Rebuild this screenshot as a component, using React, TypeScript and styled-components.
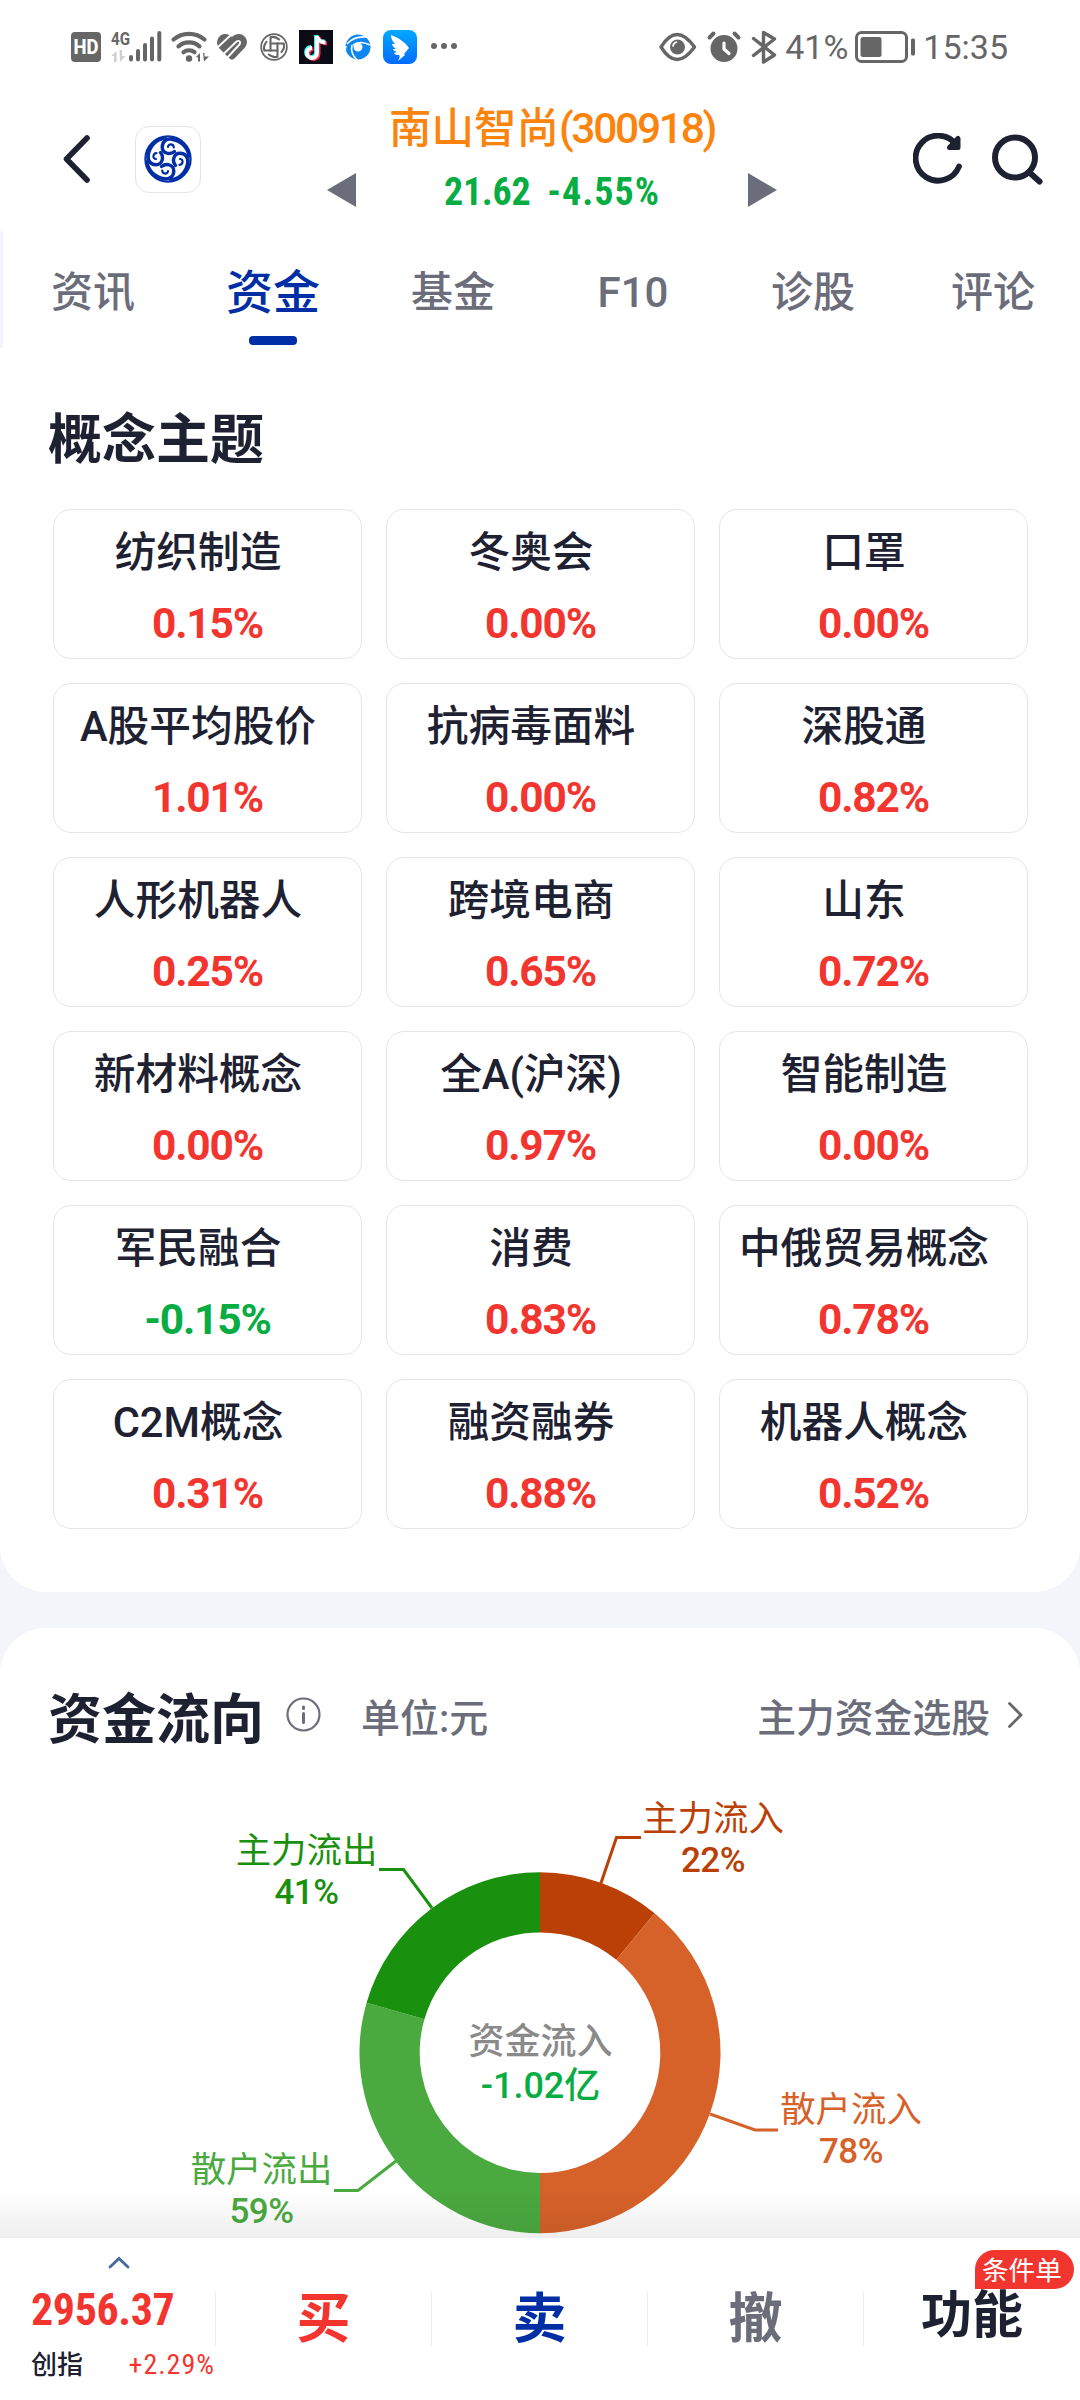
import React from 'react';
import styled, { createGlobalStyle } from 'styled-components';

const Colors = {
  ink: '#1e2131',
  gray: '#6c6d7a',
  status: '#666666',
  red: '#f3352f',
  green: '#07ad43',
  blue: '#002fa5',
  orange: '#fb840f',
  line: '#e5e5e6',
  bg: '#f4f5fa',
};

const tabs = ['资讯', '资金', '基金', 'F10', '诊股', '评论'];

const themes = [
  { name: '纺织制造', rate: '0.15%' },
  { name: '冬奥会', rate: '0.00%' },
  { name: '口罩', rate: '0.00%' },
  { name: 'A股平均股价', rate: '1.01%' },
  { name: '抗病毒面料', rate: '0.00%' },
  { name: '深股通', rate: '0.82%' },
  { name: '人形机器人', rate: '0.25%' },
  { name: '跨境电商', rate: '0.65%' },
  { name: '山东', rate: '0.72%' },
  { name: '新材料概念', rate: '0.00%' },
  { name: '全A(沪深)', rate: '0.97%' },
  { name: '智能制造', rate: '0.00%' },
  { name: '军民融合', rate: '-0.15%' },
  { name: '消费', rate: '0.83%' },
  { name: '中俄贸易概念', rate: '0.78%' },
  { name: 'C2M概念', rate: '0.31%' },
  { name: '融资融券', rate: '0.88%' },
  { name: '机器人概念', rate: '0.52%' },
];

// 环形图的四个扇区，角度从正上方顺时针计算
const slices = [
  { name: '主力流入', rate: '22%', color: '#ba4005', from: 0, to: 39.4, x: 713, y: 50, line: '601,104 616.5,58.5 641,58.5' },
  { name: '散户流入', rate: '78%', color: '#d66129', from: 39.4, to: 180, x: 851, y: 341, line: '710,335 755,351 778,351' },
  { name: '散户流出', rate: '59%', color: '#4aa93f', from: 180, to: 286.1, x: 261.5, y: 401, line: '396,382 358,411.5 334,411.5' },
  { name: '主力流出', rate: '41%', color: '#1a900f', from: 286.1, to: 360, x: 306.5, y: 82, line: '432,129 403.5,90.5 379,90.5' },
];

const CX = 540;
const CY = 273.7;

const point = (r: number, deg: number) => {
  const a = (deg * Math.PI) / 180;
  return `${CX + r * Math.sin(a)} ${CY - r * Math.cos(a)}`;
};

const slicePath = (from: number, to: number) =>
  `M${point(180.5, from)}A180.5 180.5 0 0 1 ${point(180.5, to)}L${point(120.3, to)}A120.3 120.3 0 0 0 ${point(120.3, from)}Z`;

const SwirlLogo = ({ size, color }: { size: number; color: string }) => (
  <svg width={size} height={size} viewBox='-24 -24 48 48' fill='none' stroke={color} strokeLinecap='round'>
    <circle r='22.6' strokeWidth='2.2' />
    {[0, 90, 180, 270].map((deg) => (
      <g key={deg} transform={`rotate(${deg})`}>
        <path d='M5.8 -11.5C5.5 -15.5 0 -15.5 0 -12' strokeWidth='2.2' />
        <path d='M6.5 -7.5C1.5 -3.5 -5.8 -6 -5.8 -12C-5.8 -17 -2 -20.5 3.5 -19.8C13 -18.5 19.5 -12 21 -3' strokeWidth='3.4' />
      </g>
    ))}
  </svg>
);

const StatusIcons = () => (
  <svg width='390' height='40' viewBox='70 27 390 40' fill={Colors.status}>
    <rect x='71' y='32' width='30' height='30' rx='4' />
    <text x='86' y='54' textAnchor='middle' fill='#fff' fontFamily='Roboto' fontWeight='800' fontSize='20' textLength='25' lengthAdjust='spacingAndGlyphs'>HD</text>
    <text x='111' y='44.5' fontFamily='Roboto' fontWeight='700' fontSize='19' textLength='19' lengthAdjust='spacingAndGlyphs'>4G</text>
    <path d='M111.500 56l5-5v11h-2.500v-6zM119.500 50h2.500v6h3.500l-5.500 6z' fill='#cfcfcf' />
    <g stroke={Colors.status} strokeWidth='4' strokeLinecap='round'>
      <path d='M131 57v2.500M138 51v8.500M145 45v14.500M152 38.500v21M159.300 33v26.500' />
    </g>
    <g fill='none' stroke={Colors.status} strokeWidth='4.2' strokeLinecap='round'>
      <path d='M173.500 39.500a24 24 0 0 1 31 0M178.500 46.300a16 16 0 0 1 21 0M183.500 52.200a9 9 0 0 1 11 0' />
    </g>
    <circle cx='189' cy='58.5' r='3.2' />
    <path d='M196 57l4-4v8.500h-2v-4zM203 53h1.500v3.500h4.500l-5 5z' />
    <path d='M229.500 58.500L219.500 48.500C216 44.500 216.500 39 220 36C223.500 33 228.500 33.500 232 37C235.500 33.500 241 33 244.500 36.500C248 40 247.500 44.500 244.500 48L234.500 58.500C233 60 231 60 229.500 58.500Z' />
    <g fill='none' stroke='#fff' strokeWidth='1.9'>
      <path d='M217.500 47.500L232 34' />
      <path d='M223.500 54L236.500 41.500Q239 40 240 42Q240.500 43.500 239 45L227 58' />
    </g>
    <svg x='260' y='33' width='28' height='28' viewBox='-24 -24 48 48' fill='none' stroke={Colors.status}>
      <circle r='22' strokeWidth='3' />
      <path d='M-6 -18V8M6 -8V18M-18 6H8M-8 -6H18' strokeWidth='3.5' />
      <path d='M-6 -16Q0 -20 10 -12M16 -6Q20 0 12 10M6 16Q0 20 -10 12M-16 6Q-20 0 -12 -10' strokeWidth='3.5' />
    </svg>
    <rect x='299' y='30' width='34' height='34' fill='#0b0b16' />
    <g fill='none' strokeWidth='4'>
      <path d='M317 36v17a5 5 0 1 1-5-5M317 36q1 6 8.500 6.500' stroke='#25f4ee' transform='translate(-1 -1)' />
      <path d='M317 36v17a5 5 0 1 1-5-5M317 36q1 6 8.500 6.500' stroke='#fe2c55' transform='translate(1.5 1)' />
      <path d='M317 36v17a5 5 0 1 1-5-5M317 36q1 6 8.500 6.500' stroke='#fff' />
    </g>
    <g fill='none' stroke='#0d86f0'>
      <circle cx='358' cy='47' r='8.5' strokeWidth='8' />
      <path d='M366 37Q354 36 347 44M370 45Q360 40 353 45M352 45Q350 53 357 60M347 57Q344 52 346 46' stroke='#fff' strokeWidth='1.6' />
    </g>
    <rect x='383' y='30' width='34' height='34' rx='8' fill='url(#wing)' />
    <path d='M391 35c8 3 15 8 18 13l-5 6 1 1-7 6c2-4 2-5 1-6-3 0-5-1-5-2l3-1c-3-1-4-2-4-3h3c-3-2-4-4-4-5h3c-3-3-4-6-4-9z' fill='#fff' />
    <circle cx='434' cy='46' r='3' />
    <circle cx='444' cy='46' r='3' />
    <circle cx='454' cy='46' r='3' />
    <defs>
      <linearGradient id='wing' x1='0' y1='0' x2='0' y2='1'>
        <stop offset='0' stopColor='#00a9ff' />
        <stop offset='1' stopColor='#006bff' />
      </linearGradient>
    </defs>
  </svg>
);

const DeviceIcons = () => (
  <svg width='120' height='36' viewBox='658 28 120 36' fill='none' stroke={Colors.status} strokeWidth='3.4' strokeLinecap='round' strokeLinejoin='round'>
    <path d='M661 46q15.500-25 33.500 0q-18 25-33.500 0z' />
    <circle cx='677.5' cy='46' r='7.5' fill={Colors.status} stroke='none' />
    <path d='M673 45q.5-3 3.500-4' stroke='#fff' strokeWidth='1.6' />
    <circle cx='724' cy='47.5' r='13.5' fill={Colors.status} stroke='none' />
    <path d='M709.500 36.500l4-4M738.500 36.500l-4-4' strokeWidth='4' />
    <path d='M724 42v6l5 4.500' stroke='#fff' strokeWidth='3.2' />
    <path d='M753.500 37.500l21 16.500-11 7V31.500l11 6.500-21 16.500' />
  </svg>
);

const App = () => {
  return (
    <>
      <GlobalStyle />
      <Screen>
        <StatusBar>
          <StatusIcons />
          <StatusRight>
            <DeviceIcons />
            <StatusText>41%</StatusText>
            <svg width='61' height='32' viewBox='0 0 61 32'>
              <rect x='1.5' y='1.5' width='50' height='29' rx='5' fill='none' stroke={Colors.status} strokeWidth='3' />
              <rect x='5.5' y='6' width='21' height='20' rx='2.5' fill={Colors.status} />
              <rect x='56' y='7.5' width='4' height='17' rx='1.5' fill={Colors.status} />
            </svg>
            <StatusText>15:35</StatusText>
          </StatusRight>
        </StatusBar>

        <Header>
          <HeaderLeft>
            <svg width='28' height='50' viewBox='0 0 28 50' fill='none' stroke={Colors.ink} strokeWidth='5.6' strokeLinecap='round' strokeLinejoin='round'>
              <path d='M24 4L3.500 25L24 46' />
            </svg>
            <LogoBox>
              <SwirlLogo size={48} color={Colors.blue} />
            </LogoBox>
          </HeaderLeft>
          <Stock>
            <StockName>
              南山智尚<StockCode>(300918)</StockCode>
            </StockName>
            <QuoteRow>
              <svg width='29' height='34'><path d='M0 17L29 0V34z' fill={Colors.gray} /></svg>
              <Quote>
                <span>21.62</span>
                <span>-4.55%</span>
              </Quote>
              <svg width='29' height='34'><path d='M29 17L0 0V34z' fill={Colors.gray} /></svg>
            </QuoteRow>
          </Stock>
          <HeaderRight>
            <svg width='50' height='53' viewBox='0 0 50 53' fill='none' stroke={Colors.ink} strokeWidth='5.8' strokeLinecap='round' strokeLinejoin='round'>
              <path d='M46 33.500A22.500 22.500 0 1 1 43 11.500' />
              <path d='M45 5.500V14.500H36.500z' fill={Colors.ink} strokeWidth='5' />
            </svg>
            <svg width='51' height='51' viewBox='0 0 51 51' fill='none' stroke={Colors.ink} strokeWidth='6' strokeLinecap='round'>
              <circle cx='23' cy='23.5' r='20' />
              <path d='M37.500 38.500L47.500 47.500' />
            </svg>
          </HeaderRight>
        </Header>

        <TabBar>
          {tabs.map((tab) => (
            <Tab key={tab} $active={tab === '资金'}>
              {tab}
            </Tab>
          ))}
        </TabBar>

        <ThemeSection>
          <Title>概念主题</Title>
          <ThemeGrid>
            {themes.map((theme) => (
              <ThemeCard key={theme.name}>
                <ThemeName>{theme.name}</ThemeName>
                <ThemeRate $down={theme.rate.startsWith('-')}>{theme.rate}</ThemeRate>
              </ThemeCard>
            ))}
          </ThemeGrid>
        </ThemeSection>

        <FlowSection>
          <FlowHead>
            <Title>资金流向</Title>
            <InfoIcon width='35' height='35' viewBox='0 0 35 35' fill='none' stroke={Colors.gray} strokeLinecap='round'>
              <circle cx='17.5' cy='17.5' r='16' strokeWidth='2.2' />
              <path d='M17.500 16.500v9M17.500 10v1.500' strokeWidth='3' />
            </InfoIcon>
            <Unit>单位:元</Unit>
            <MoreLink>
              主力资金选股
              <MoreArrow width='17' height='28' viewBox='0 0 17 28' fill='none' stroke='#666' strokeWidth='2.8' strokeLinecap='round'>
                <path d='M2.500 2.500L14 14L2.500 25.500' />
              </MoreArrow>
            </MoreLink>
          </FlowHead>
          <Chart viewBox='0 0 1080 458'>
            {slices.map((s) => (
              <g key={s.name}>
                <path d={slicePath(s.from, s.to)} fill={s.color} />
                <polyline points={s.line} fill='none' stroke={s.color} strokeWidth='3' />
                <ChartLabel x={s.x} y={s.y + 1.5} fill={s.color}>{s.name}</ChartLabel>
                <ChartValue x={s.x} y={s.y + 43} fill={s.color}>{s.rate}</ChartValue>
              </g>
            ))}
            <CenterLabel x='540.5' y='274.5' fill='#8a8a8a'>资金流入</CenterLabel>
            <CenterLabel x='540.5' y='319' fill={Colors.green}>-1.02亿</CenterLabel>
          </Chart>
        </FlowSection>

        <Footer>
          <IndexCell>
            <svg width='22' height='13' viewBox='0 0 22 13' fill='none' stroke='#4468a0' strokeWidth='2.8' strokeLinecap='round'>
              <path d='M2 11L11 2.500L20 11' />
            </svg>
            <IndexValue>2956.37</IndexValue>
            <IndexRow>
              <IndexName>创指</IndexName>
              <IndexRate>+2.29%</IndexRate>
            </IndexRow>
          </IndexCell>
          <Action $color={Colors.red}>买</Action>
          <Action $color={Colors.blue}>卖</Action>
          <Action $color={Colors.gray}>撤</Action>
          <Action $color={Colors.ink} $small>
            功能
            <Badge>条件单</Badge>
          </Action>
        </Footer>
      </Screen>
    </>
  );
};

export default App;

const GlobalStyle = createGlobalStyle`
  * {
    box-sizing: border-box;
  }
  body {
    margin: 0;
    background-color: ${Colors.bg};
    font-family: Roboto, 'Noto Sans CJK SC', sans-serif;
  }
  svg {
    display: block;
    flex-shrink: 0;
  }
`;

const Screen = styled.div`
  width: 1080px;
  height: 2400px;
  overflow: hidden;
  display: flex;
  flex-direction: column;
  background-color: ${Colors.bg};
`;

const StatusBar = styled.div`
  height: 94px;
  flex-shrink: 0;
  padding: 0 72px 0 70px;
  display: flex;
  align-items: center;
  justify-content: space-between;
  background-color: white;
`;

const StatusRight = styled.div`
  display: flex;
  align-items: center;
  gap: 7px;
`;

const StatusText = styled.span`
  font-size: 34px;
  line-height: 40px;
  color: ${Colors.status};
`;

const Header = styled.header`
  height: 137px;
  flex-shrink: 0;
  display: grid;
  grid-template-columns: 327px 450px 1fr;
  background-color: white;
`;

const HeaderLeft = styled.div`
  height: 130px;
  padding-left: 63px;
  display: flex;
  align-items: center;
  gap: 44px;
`;

const LogoBox = styled.div`
  width: 66px;
  height: 67px;
  border: 1px solid #e4e4e6;
  border-radius: 14px;
  display: flex;
  align-items: center;
  justify-content: center;
`;

const Stock = styled.div`
  display: flex;
  flex-direction: column;
`;

const StockName = styled.div`
  padding-top: 5px;
  font-size: 42.5px;
  line-height: 60px;
  font-weight: 500;
  text-align: center;
  color: ${Colors.orange};
`;

const StockCode = styled.span`
  letter-spacing: -2.3px;
`;

const QuoteRow = styled.div`
  height: 62px;
  display: flex;
  align-items: center;
  justify-content: space-between;
`;

const Quote = styled.div`
  padding-top: 3px;
  display: flex;
  gap: 17px;
  font-size: 38px;
  font-weight: 700;
  font-stretch: 75%;
  color: ${Colors.green};
  span:first-child {
    letter-spacing: -0.3px;
  }
  span:last-child {
    letter-spacing: 1px;
  }
`;

const HeaderRight = styled.div`
  height: 130px;
  padding-right: 37px;
  display: flex;
  align-items: center;
  justify-content: flex-end;
  gap: 29px;
`;

const TabBar = styled.nav`
  height: 117px;
  flex-shrink: 0;
  display: flex;
  border-left: 3px solid ${Colors.bg};
  background-color: white;
`;

const Tab = styled.div<{ $active: boolean }>`
  flex: 0 0 180px;
  display: flex;
  flex-direction: column;
  align-items: center;
  padding-top: 32px;
  font-size: ${({ $active }) => ($active ? 47 : 42)}px;
  line-height: 60px;
  font-weight: 500;
  color: ${({ $active }) => ($active ? Colors.blue : Colors.gray)};
  &::after {
    content: '';
    width: 48px;
    height: 9px;
    margin-top: 13px;
    border-radius: 4px;
    background-color: ${({ $active }) => ($active ? Colors.blue : 'transparent')};
  }
`;

const ThemeSection = styled.section`
  height: 1244px;
  flex-shrink: 0;
  padding: 53px 52px 0 53px;
  border-radius: 0 0 46px 46px;
  background-color: white;
`;

const Title = styled.h2`
  margin: 0 0 0 -5px;
  font-size: 54px;
  line-height: 80px;
  font-weight: 700;
  color: ${Colors.ink};
`;

const ThemeGrid = styled.div`
  margin-top: 28px;
  display: grid;
  grid-template-columns: repeat(3, 309px);
  grid-auto-rows: 150px;
  gap: 24px;
`;

const ThemeCard = styled.div`
  border: 1px solid ${Colors.line};
  border-radius: 18px;
  text-align: center;
`;

const ThemeName = styled.div`
  padding: 13px 19px 0 0;
  font-size: 41.7px;
  line-height: 60px;
  font-weight: 500;
  white-space: nowrap;
  color: ${Colors.ink};
`;

const ThemeRate = styled.div<{ $down: boolean }>`
  margin-top: 11px;
  font-size: 42.5px;
  line-height: 60px;
  font-weight: 700;
  letter-spacing: -1.2px;
  color: ${({ $down }) => ($down ? Colors.green : Colors.red)};
`;

const FlowSection = styled.section`
  height: 610px;
  flex-shrink: 0;
  margin-top: 36px;
  border-radius: 46px 46px 0 0;
  background-color: white;
`;

const FlowHead = styled.div`
  height: 150.5px;
  padding: 53px 56px 0 53px;
  display: flex;
  align-items: flex-start;
  line-height: 80px;
`;

const InfoIcon = styled.svg`
  margin: 16px 0 0 22px;
`;

const Unit = styled.span`
  margin: -2px 0 0 40px;
  font-size: 39px;
  font-weight: 500;
  color: ${Colors.gray};
`;

const MoreLink = styled.div`
  margin: -2px 0 0 auto;
  display: flex;
  align-items: center;
  gap: 17px;
  font-size: 38.8px;
  font-weight: 500;
  color: ${Colors.gray};
`;

const MoreArrow = styled.svg`
  margin-bottom: 8px;
`;

const Chart = styled.svg`
  width: 1080px;
  height: 458px;
`;

const ChartLabel = styled.text`
  font-size: 35.4px;
  text-anchor: middle;
`;

const ChartValue = styled.text`
  font-size: 35px;
  font-weight: 500;
  letter-spacing: -0.5px;
  text-anchor: middle;
`;

const CenterLabel = styled.text`
  font-size: 36px;
  font-weight: 500;
  text-anchor: middle;
`;

const Footer = styled.footer`
  position: relative;
  height: 162px;
  flex-shrink: 0;
  display: grid;
  grid-template-columns: 215px repeat(3, 216px) 217px;
  background-color: white;
  &::before {
    content: '';
    position: absolute;
    left: 0;
    right: 0;
    bottom: 100%;
    height: 48px;
    background: linear-gradient(to bottom, rgba(0, 0, 0, 0), rgba(0, 0, 0, 0.065));
  }
`;

const IndexCell = styled.div`
  display: flex;
  flex-direction: column;
  padding: 18px 0 0 31px;
  svg {
    margin-left: 77px;
  }
`;

const IndexValue = styled.div`
  margin-top: 15px;
  font-size: 44px;
  line-height: 52px;
  font-weight: 700;
  font-stretch: 75%;
  letter-spacing: -0.4px;
  color: ${Colors.red};
`;

const IndexRow = styled.div`
  width: 184px;
  margin-top: 11px;
  display: flex;
  justify-content: space-between;
  line-height: 36px;
`;

const IndexName = styled.span`
  font-size: 26px;
  font-weight: 500;
  color: ${Colors.ink};
`;

const IndexRate = styled.span`
  font-size: 28px;
  font-stretch: 75%;
  letter-spacing: 1px;
  color: ${Colors.red};
`;

const Action = styled.div<{ $color: string; $small?: boolean }>`
  position: relative;
  height: 54px;
  margin-top: 54px;
  border-left: 1px solid #ececec;
  font-size: ${({ $small }) => ($small ? 51 : 54)}px;
  line-height: ${({ $small }) => ($small ? 48 : 56)}px;
  font-weight: 700;
  text-align: center;
  color: ${({ $color }) => $color};
`;

const Badge = styled.span`
  position: absolute;
  top: -42px;
  right: 6px;
  width: 99px;
  height: 39px;
  padding-left: 7px;
  border-radius: 20px 20px 20px 0;
  font-size: 26.6px;
  line-height: 41px;
  font-weight: 400;
  text-align: left;
  color: white;
  background-color: ${Colors.red};
`;
